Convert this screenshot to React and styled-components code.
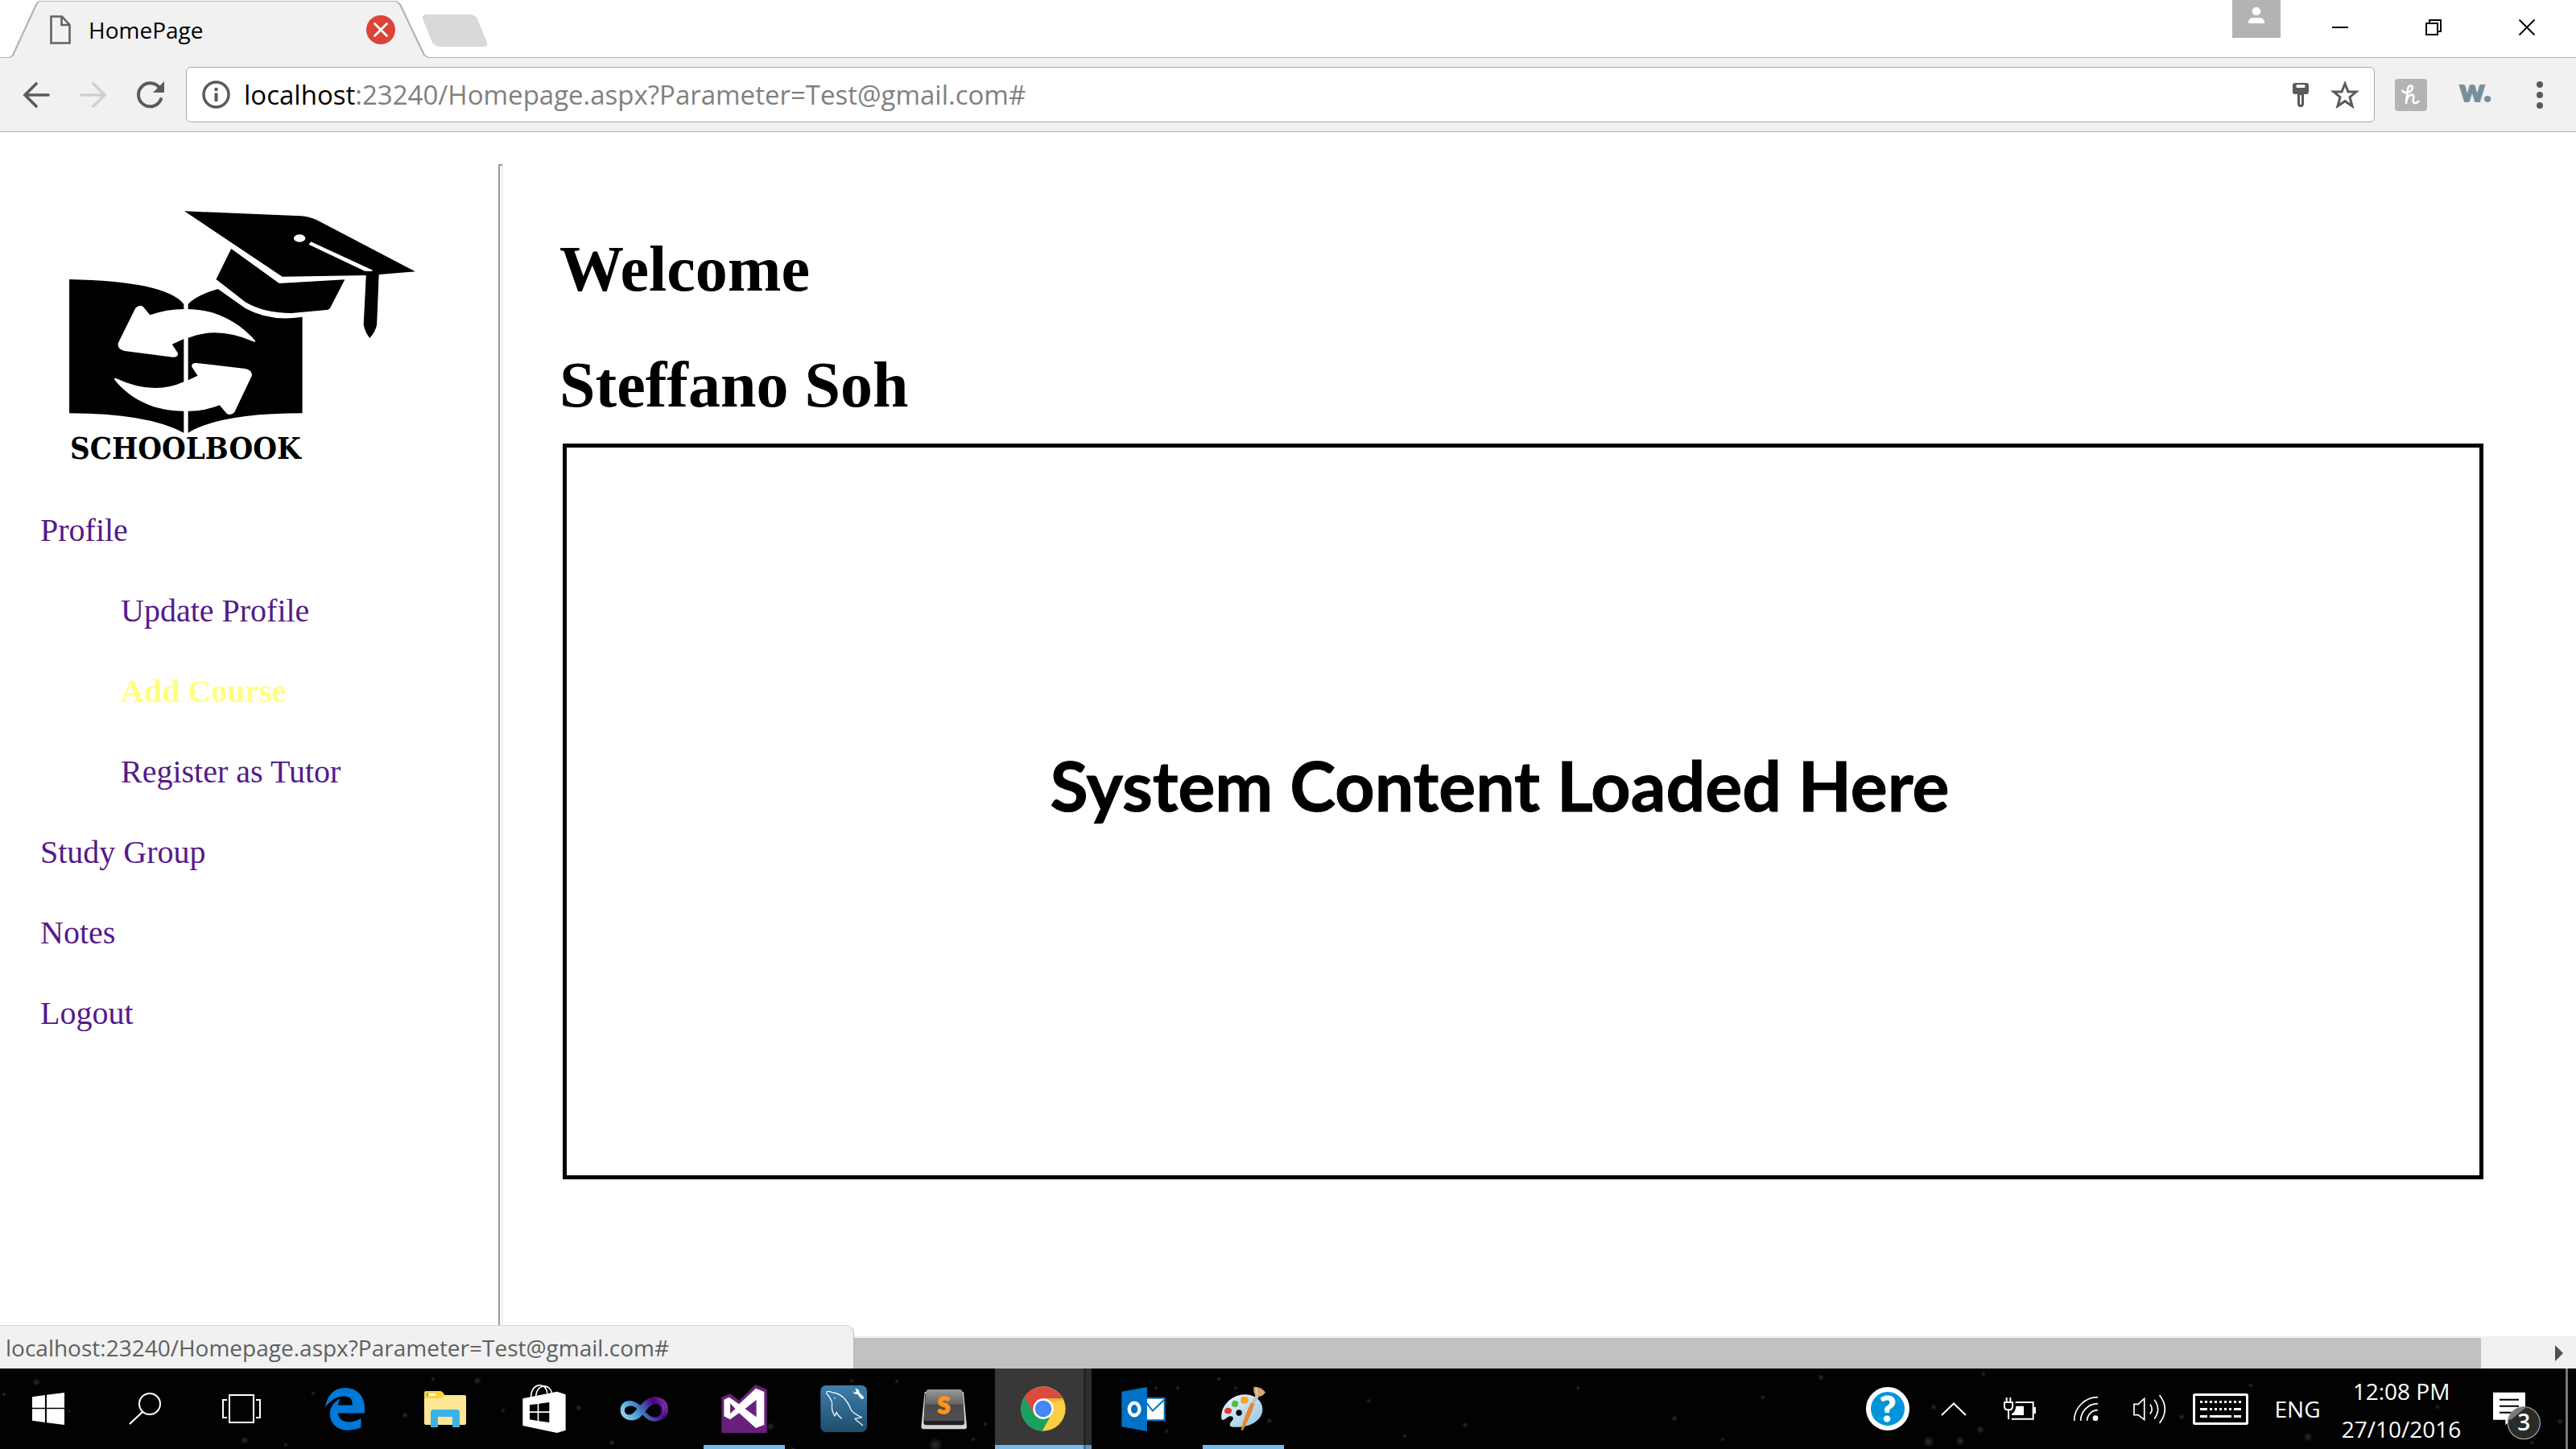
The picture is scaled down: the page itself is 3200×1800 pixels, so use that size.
import React from "react";
import styled, { createGlobalStyle, css } from "styled-components";

const UI = `"Open Sans", "Noto Sans", sans-serif`;
const SERIF = `"Liberation Serif", "Times New Roman", serif`;

const GlobalStyle = createGlobalStyle`
  *, *::before, *::after { box-sizing: border-box; }
  body { margin: 0; background: #fff; }
  button { border: 0; padding: 0; background: none; font: inherit; color: inherit; }
`;

/* ---------- shared ---------- */

const Drawing = styled.svg`
  display: block;
  flex: none;
  overflow: visible;
  width: ${(p) => p.$w}px;
  height: ${(p) => p.$h}px;
`;

const Icon = ({ box, w, h, children }) => (
  <Drawing $w={w} $h={h} viewBox={box} preserveAspectRatio="none" aria-hidden="true" fill="none">
    {children}
  </Drawing>
);

const Screen = styled.div`
  display: flex;
  flex-direction: column;
  height: 100vh;
  overflow: hidden;
  font-family: ${UI};
`;

/* ---------- tab strip ---------- */

const TabStrip = styled.header`
  display: flex;
  align-items: flex-start;
  height: 72px;
  padding: 0 3px 0 12px;
  border-bottom: 1px solid #b1b1b1;
`;

const Tab = styled.div`
  position: relative;
  z-index: 0;
  display: flex;
  align-items: center;
  width: 521px;
  height: 72px;
  padding: 2px 42px 0 50px;
  font-size: 28px;
  line-height: 36px;
  color: #000;
  &::before, &::after {
    content: "";
    position: absolute;
    z-index: -1;
    inset: 0;
    background: #b4b4b4;
    clip-path: polygon(0 100%, 0 71px, 3px 68px, 32px 5px, 36px 1px, 481px 1px, 486px 5px, 516px 68px, 521px 71px, 100% 100%);
  }
  &::after {
    background: #f1f1f1;
    clip-path: polygon(0 100%, 1px 72px, 5px 69px, 34px 6px, 37px 2px, 480px 2px, 484px 6px, 514px 69px, 520px 72px, 100% 100%);
  }
`;

const TabTitle = styled.span`
  flex: 1;
  padding-left: 22px;
`;

const TabClose = styled.button`
  display: grid;
  place-items: center;
  width: 36px;
  height: 36px;
  border-radius: 50%;
  background: #db4437;
`;

const NewTab = styled.button`
  width: 68px;
  height: 40px;
  margin: 18px auto 0 -2px;
  border-radius: 6px;
  background: #d9d9d9;
  transform: skewX(22deg);
`;

const UserBadge = styled.button`
  display: flex;
  justify-content: center;
  width: 60px;
  height: 47px;
  padding-top: 9px;
  margin-right: 16px;
  background: #b3b3b3;
`;

const WindowButton = styled.button`
  display: grid;
  place-items: center;
  width: 116px;
  height: 68px;
`;

/* ---------- toolbar ---------- */

const Toolbar = styled.div`
  display: flex;
  align-items: center;
  padding: 11px 5px 11px 9px;
  background: #f1f1f1;
  border-bottom: 1px solid #b1b1b1;
`;

const ToolButton = styled.button`
  display: grid;
  place-items: center;
  width: 71px;
  height: 60px;
`;

const Omnibox = styled.div`
  flex: 1;
  display: flex;
  align-items: center;
  height: 69px;
  margin: 0 5px 0 9px;
  padding: 0 18px 0 19px;
  border: 1px solid #a9a9a9;
  border-radius: 6px;
  background: #fff;
  font-size: 33px;
  line-height: 44px;
`;

const Host = styled.label`
  padding-left: 17px;
  color: #000;
`;

const Address = styled.input`
  flex: 1;
  min-width: 0;
  border: 0;
  padding: 0;
  outline: 0;
  background: none;
  font: inherit;
  color: #808080;
`;

const OmniButton = styled.button`
  margin-left: 27px;
`;

const ExtensionButton = styled.button`
  display: grid;
  place-items: center;
  width: 80px;
  height: 60px;
`;

const HoneyTile = styled.span`
  display: grid;
  place-items: center;
  width: 40px;
  height: 40px;
  border-radius: 4px;
  background: #b1b3b5;
`;

const Wordmark = styled.span`
  padding-bottom: 14px;
  font-family: Lato, sans-serif;
  font-weight: 900;
  font-size: 38px;
  line-height: 40px;
  color: #78909c;
  -webkit-text-stroke: 2px #78909c;
`;

/* ---------- web page ---------- */

const Viewport = styled.div`
  position: relative;
  flex: 1;
  min-height: 0;
  display: flex;
  flex-direction: column;
`;

const Page = styled.div`
  flex: 1;
  min-height: 0;
  display: flex;
  font-family: ${SERIF};
  font-size: 40px;
`;

const Sidebar = styled.aside`
  flex: none;
  width: 619px;
  padding-top: 96px;
`;

const Brand = styled.div`
  padding-left: 83px;
`;

const BrandName = styled.div`
  padding-left: 4px;
  font-family: "DejaVu Serif Condensed", "DejaVu Serif", serif;
  font-weight: bold;
  font-size: 38px;
  line-height: 34px;
  color: #000;
`;

const Menu = styled.ul`
  display: flex;
  flex-direction: column;
  gap: 50px;
  margin: 0;
  padding: ${(p) => (p.$nested ? "50px 0 0 100px" : "60px 0 0 50px")};
  list-style: none;
  line-height: 50px;
`;

const MenuLink = styled.a`
  color: #551a8b;
  text-decoration: none;
  ${(p) =>
    p.$active &&
    css`
      color: #ffff80;
      font-weight: bold;
    `}
`;

const Divider = styled.div`
  flex: none;
  width: 6px;
  margin-top: 40px;
  border: 2px solid #eee;
  border-top-color: #9a9a9a;
  border-left-color: #9a9a9a;
  border-bottom: 0;
`;

const Main = styled.main`
  flex: 1;
  padding: 124px 115px 0 70px;
`;

const Heading = styled.h1`
  margin: 0 0 ${(p) => (p.$last ? 27 : 52)}px;
  font-size: 80px;
  line-height: 92px;
  font-weight: bold;
  color: #000;
`;

const ContentFrame = styled.section`
  display: grid;
  place-items: center;
  height: 914px;
  margin-left: 4px;
  padding: 0 58px 66px 0;
  border: 5px solid #000;
  font-family: Lato, sans-serif;
  font-weight: bold;
  font-size: 86px;
  line-height: 106px;
  color: #000;
  -webkit-text-stroke: 1px #000;
`;

const ScrollTrack = styled.div`
  display: flex;
  height: 40px;
  padding: 2px 16px 0 40px;
  background: #f1f1f1;
`;

const ScrollThumb = styled.div`
  flex: 1;
  margin-right: 92px;
  background: #c1c1c1;
`;

const ScrollButton = styled.button`
  display: grid;
  place-items: center;
`;

const StatusBubble = styled.div`
  position: absolute;
  left: 0;
  bottom: 0;
  width: 1061px;
  height: 54px;
  padding: 7px;
  border-top: 1px solid #d6d6d6;
  border-right: 1px solid #b8b8b8;
  border-top-right-radius: 10px;
  background: #f1f1f1;
  font-size: 28px;
  line-height: 40px;
  color: #5f5f5f;
`;

/* ---------- taskbar ---------- */

const STARS = [
  [45, 17, 5], [5, 32, 3], [78, 34, 3], [86, 53, 2], [304, 89, 5], [355, 95, 3], [538, 13, 3],
  [593, 15, 5], [503, 58, 4], [389, 31, 3], [625, 52, 3], [103, 104, 3], [719, 49, 4], [760, 92, 4],
  [957, 72, 5], [985, 101, 4], [1058, 15, 3], [1114, 16, 3], [1162, 95, 9], [1209, 88, 3],
  [1224, 69, 3], [1436, 24, 3], [1463, 24, 3], [1514, 13, 3], [1535, 24, 3], [1577, 65, 4], [1449, 78, 3],
  [2262, 11, 4], [2396, 91, 7], [2435, 90, 6], [2460, 76, 5], [2402, 48, 4], [2464, 7, 3], [2710, 60, 4],
  [2867, 85, 6], [2796, 21, 3], [3180, 66, 4], [3028, 48, 3], [3145, 92, 3], [1700, 40, 3], [1820, 70, 4],
  [1960, 24, 3], [2080, 62, 4], [2190, 36, 3], [1745, 84, 3], [2140, 88, 3],
];

const starField = STARS.map(
  ([x, y, r]) => `radial-gradient(circle at ${x}px ${y}px, #2b3034 0, transparent ${r}px)`
).join(",");

const Taskbar = styled.footer`
  flex: none;
  display: flex;
  height: 100px;
  background: ${starField}, #030203;
  color: #fff;
`;

const SystemButton = styled.button`
  display: grid;
  place-items: center;
  width: 120px;
`;

const AppList = styled.div`
  flex: 1;
  display: flex;
  gap: 4px;
  padding-left: 8px;
`;

const AppButton = styled.button`
  position: relative;
  display: grid;
  place-items: center;
  width: 120px;
  ${(p) =>
    p.$running &&
    css`
      &::after {
        content: "";
        position: absolute;
        left: ${p.$active ? 0 : 10}px;
        right: ${p.$active ? 0 : 9}px;
        bottom: 0;
        height: 5px;
        background: ${p.$active ? "linear-gradient(90deg, #76b9ed 110px, #476f8e 110px 113px, #5f95bf 113px)" : "#76b9ed"};
      }
    `}
  ${(p) =>
    p.$active &&
    css`
      background: linear-gradient(90deg, #383838 110px, #222 110px 113px, #2d2d2d 113px);
    `}
`;

const TrayButton = styled.button`
  display: grid;
  place-items: center;
  flex: none;
  width: ${(p) => p.$width || 82}px;
  font-size: 28px;
  line-height: 47px;
`;

const Clock = styled(TrayButton)`
  align-content: center;
  padding-top: 3px;
`;

const NotificationButton = styled(TrayButton)`
  padding-top: 18px;
`;

const ShowDesktop = styled.button`
  width: 13px;
  border-left: 3px solid #777;
`;

/* ---------- drawings ---------- */

const SchoolbookLogo = () => (
  <Icon box="60 210 1140 840" w={436} h={280}>
    <g fill="#000">
      <path d="M442 217L820 235Q845 236 872 250L1192 442L1074 453Q1073 460 1072 500L1067 640Q1062 668 1044 690Q1028 668 1024 640L1032 456L760 461Z" />
      <path d="M594 357L750 486L963 472L915 578Q911 585 903 585L790 597Q700 597 640 556L545 471Z" />
      <path d="M68 471Q380 478 440 563V1043Q320 970 68 970Z" />
      <path d="M454 563Q480 530 551 507L640 579Q720 630 825 611V970Q560 970 454 1043Z" />
    </g>
    <g fill="#fff">
      <ellipse cx="816" cy="318" rx="19" ry="14" />
      <path d="M853 331L1054 437L1050 441L1028 440L846 341Z" />
      <path d="M330 604Q385 582 440 582C540 578 620 630 672 700Q674 706 666 703Q550 645 454 689L440 693L402 713L420 745Q424 760 405 761L248 738Q222 730 227 708L283 578Q296 564 308 573Z" />
      <path d="M485 830L466 797Q464 781 482 783L640 804Q663 810 661 830L605 965Q595 980 580 972L556 940Q510 962 454 962C350 966 268 920 215 845Q213 838 220 840Q340 905 440 853L454 847Z" />
    </g>
  </Icon>
);

const WindowsIcon = () => (
  <Icon box="98 120 98 120" w={40} h={40}>
    <path fill="#fff" d="M98 136L137 129V176H98ZM142 128L196 120V176H142ZM98 181H137V231L98 224ZM142 181H196V240L142 232Z" />
  </Icon>
);

const SearchIcon = () => (
  <Icon box="0 0 40 40" w={40} h={40}>
    <circle cx="26" cy="14" r="13" stroke="#fff" strokeWidth="2" />
    <path d="M17 24L1 39" stroke="#fff" strokeWidth="2.2" />
  </Icon>
);

const TaskViewIcon = () => (
  <Icon box="0 0 48 36" w={48} h={36}>
    <path d="M9 1H39V35H9ZM6 7H1V29H6M42 7H47V29H42" stroke="#fff" strokeWidth="2" />
  </Icon>
);

const EdgeIcon = () => (
  <Icon box="988 99 120 160" w={49} h={53}>
    <path fill="#0078d7" d="M988 172C994 125 1015 99 1050 99C1085 101 1108 128 1108 175V194H1027C1029 218 1044 227 1060 227Q1080 227 1097 213V248Q1078 258 1055 258C1022 256 1002 230 1002 196C1003 170 1014 151 1034 140Q1028 150 1027 164H1071C1071 143 1064 131 1046 131C1020 132 1003 148 988 172Z" />
  </Icon>
);

const FolderIcon = () => (
  <Icon box="0 0 53 45" w={53} h={45}>
    <path d="M1 3Q1 0 4 0H20Q24 0 26 5H51Q53 5 53 7V40Q53 42 51 42H3Q1 42 1 40Z" fill="#ffe694" />
    <path d="M1 3Q1 0 4 0H20Q24 1 26 5Q24 9 20 9H1Z" fill="#fdd23b" />
    <path d="M4 3H15V6H4Z" fill="#fff" />
    <path d="M4 3H6V6H4Z" fill="#29a9e8" />
    <path d="M9 45V27Q9 23 13 23H41Q45 23 45 27V45H36V32H18V45Z" fill="#3bb3e8" />
  </Icon>
);

const StoreIcon = () => (
  <Icon box="26 90 162 180" w={54} h={60}>
    <path d="M58 138C57 80 116 80 118 122M76 132C80 85 128 86 136 122" stroke="#fff" strokeWidth="5" />
    <path fill="#fff" fillRule="evenodd" d="M27 142L155 116L187 127V260L155 270L27 243ZM53 166V190H82V162ZM87 161V190H126V156ZM53 195V220L82 225V195ZM87 195V226L126 231V195Z" />
  </Icon>
);

const BlendIcon = () => (
  <Icon box="388 140 182 92" w={61} h={31}>
    <defs>
      <linearGradient id="loop" x1="0" x2="1" y1="0.6" y2="0.3">
        <stop offset="0" stopColor="#8fd0ea" />
        <stop offset="0.3" stopColor="#3f9fd4" />
        <stop offset="0.55" stopColor="#4546a4" />
        <stop offset="0.75" stopColor="#4b0082" />
        <stop offset="1" stopColor="#7d35a8" />
      </linearGradient>
    </defs>
    <path fill="url(#loop)" fillRule="evenodd" d="M390 190C390 165 408 154 426 155C444 156 454 166 464 172C482 152 500 140 522 141C550 143 567 162 567 187C567 212 545 231 518 231C498 231 485 220 472 207C460 220 448 228 430 227C408 226 390 212 390 190ZM406 194C408 204 418 209 430 205C440 201 446 192 452 184C444 177 436 173 426 174C412 175 404 183 406 194ZM482 196C494 210 508 218 522 216C537 213 543 196 540 182C537 170 528 165 518 167C502 170 492 182 482 196Z" />
    <path d="M404 172Q394 190 408 214M545 166Q560 190 538 218" stroke="#b7d8f0" strokeOpacity="0.4" strokeWidth="2" />
  </Icon>
);

const VisualStudioIcon = () => (
  <Icon box="767 90 170 180" w={57} h={60}>
    <path fill="#68217a" d="M768 137L800 124L833 150L893 90L936 108V270H768Z" />
    <path fill="#fff" fillRule="evenodd" d="M777 146L796 137L833 163L895 104L926 117V240L895 252L833 196L800 220L777 208ZM800 160V198L819 180ZM855 180L897 147V211Z" />
  </Icon>
);

const MySqlIcon = () => (
  <Icon box="1136 93 175 174" w={58} h={58}>
    <defs>
      <linearGradient id="sea" x1="0" x2="0" y1="0" y2="1">
        <stop offset="0" stopColor="#3d7fad" />
        <stop offset="1" stopColor="#1f4e6b" />
      </linearGradient>
    </defs>
    <rect x="1137" y="93" width="174" height="174" rx="20" fill="url(#sea)" />
    <path
      d="M1160 124C1156 114 1168 112 1182 120C1215 122 1238 150 1252 185C1262 200 1278 205 1291 212L1266 217C1274 228 1286 232 1295 243M1160 124C1170 134 1172 140 1178 151C1184 160 1176 170 1181 186C1184 200 1190 205 1190 207C1194 204 1194 198 1196 193C1202 205 1210 212 1217 217"
      stroke="#eef6fb" strokeWidth="4" strokeLinejoin="round"
    />
    <circle cx="1190" cy="140" r="3" fill="#d5e6f0" />
    <path d="M1266 104L1272 114L1264 121L1257 113Q1262 128 1275 125L1290 144Q1298 146 1300 137L1282 119Q1283 105 1266 104Z" fill="#fff" />
  </Icon>
);

const SublimeIcon = () => (
  <Icon box="130 100 170 152" w={57} h={51}>
    <defs>
      <linearGradient id="key" x1="0" x2="0" y1="0" y2="1">
        <stop offset="0" stopColor="#999" />
        <stop offset="0.45" stopColor="#666" />
        <stop offset="0.5" stopColor="#4a4a4a" />
        <stop offset="1" stopColor="#505050" />
      </linearGradient>
    </defs>
    <path d="M144 112H288L300 240Q300 250 290 250H141Q131 250 131 240Z" fill="#d4d4d4" />
    <path d="M146 118L140 226Q140 235 150 235H282Q292 235 291 226L285 118Z" fill="#222" />
    <path d="M158 103H274Q282 103 284 112L291 212Q290 219 282 219H149Q141 219 141 212L149 112Q151 103 158 103Z" fill="url(#key)" />
    <text x="215" y="192" textAnchor="middle" fontFamily="Lato, sans-serif" fontWeight="900" fontSize="86" fill="#ff9518" stroke="#ff9518" strokeWidth="5">S</text>
  </Icon>
);

const ChromeIcon = () => (
  <Icon box="0 0 168 168" w={56} h={56}>
    <circle cx="84" cy="84" r="83" fill="#ffcd40" />
    <path d="M12 43A83 83 0 0 1 157 46H84L48 104Z" fill="#db4b3f" />
    <path d="M14 40L50 104Q62 122 84 122L108 116L80 167A83 83 0 0 1 14 40Z" fill="#1aa15f" />
    <path d="M84 46H157L160 52L110 58Z" fill="#e9b52f" />
    <circle cx="84" cy="84" r="38" fill="#fff" />
    <circle cx="84" cy="84" r="31" fill="#4687f4" />
  </Icon>
);

const OutlookIcon = () => (
  <Icon box="878 98 164 164" w={55} h={55}>
    <rect x="960" y="136" width="81" height="88" rx="4" fill="#0072c6" />
    <path d="M972 142H1035V218H972Z" fill="#fff" />
    <path d="M972 158L994 186L1036 146" stroke="#0072c6" strokeWidth="6" />
    <path d="M879 115L973 98V262L879 245Z" fill="#0072c6" />
    <ellipse cx="926" cy="180" rx="19" ry="23" stroke="#fff" strokeWidth="13" />
  </Icon>
);

const PaintIcon = () => (
  <Icon box="1245 95 170 168" w={57} h={56}>
    <defs>
      <linearGradient id="palette" x1="0" x2="1" y1="0" y2="1">
        <stop offset="0" stopColor="#f1f8fc" />
        <stop offset="1" stopColor="#8fc4e2" />
      </linearGradient>
    </defs>
    <path d="M1249 215C1244 165 1290 125 1338 126C1380 128 1402 155 1401 182C1400 225 1350 252 1290 247C1274 244 1280 232 1290 222C1298 208 1285 202 1272 210C1262 220 1251 226 1249 215Z" fill="url(#palette)" />
    <circle cx="1314" cy="194" r="11" fill="#000" />
    <path d="M1260 186Q1266 170 1276 176Q1290 178 1286 190Q1280 202 1270 197Q1260 198 1260 186Z" fill="#e23b32" />
    <path d="M1287 160Q1290 146 1301 149Q1313 150 1311 163Q1308 176 1297 172Q1286 172 1287 160Z" fill="#58b947" />
    <path d="M1320 147Q1321 132 1334 134Q1350 134 1349 149Q1346 162 1333 160Q1320 160 1320 147Z" fill="#f9a61c" />
    <path d="M1360 155L1372 160Q1352 220 1327 261L1322 258Q1334 200 1360 155Z" fill="#e8862c" />
    <path d="M1376 128L1388 134L1372 161L1360 156Z" fill="#b9c4cc" />
    <path d="M1369 97Q1396 96 1412 118Q1402 132 1388 134L1374 130Q1366 116 1369 97Z" fill="#d2a679" />
    <path d="M1378 100Q1376 116 1384 130" stroke="#ecd0ac" strokeWidth="4" />
  </Icon>
);

const HelpIcon = () => (
  <Icon box="0 0 56 56" w={56} h={56}>
    <circle cx="28" cy="28" r="24" fill="#0095da" stroke="#fff" strokeWidth="6" />
    <text x="28" y="44" textAnchor="middle" fontFamily="Lato, sans-serif" fontWeight="900" fontSize="44" fill="#fff" stroke="#fff">?</text>
  </Icon>
);

const BatteryIcon = () => (
  <Icon box="0 0 120 84" w={40} h={28}>
    <path d="M44 18H110V80H30" stroke="#fff" strokeWidth="6" />
    <path d="M111 36H120V60H111Z" fill="#fff" />
    <path d="M46 32H75V66H30V60Q44 55 46 32Z" fill="#fff" />
    <path d="M3 18H33V36Q31 46 22 46H14Q5 46 3 36ZM11 18V0M25 18V0M18 46V81" stroke="#fff" strokeWidth="6" />
  </Icon>
);

const WifiIcon = () => (
  <Icon box="0 0 90 90" w={30} h={30}>
    <path d="M2 90A88 88 0 0 1 90 2M26 90A64 64 0 0 1 90 26M50 90A40 40 0 0 1 90 50" stroke="#fff" strokeWidth="5" />
    <circle cx="81" cy="80" r="10" fill="#fff" />
  </Icon>
);

const SpeakerIcon = () => (
  <Icon box="0 0 122 110" w={41} h={37}>
    <path d="M3 37H18L41 16V94L18 76H3Z" stroke="#fff" strokeWidth="5" />
    <path d="M62 37Q76 55 62 73M78 20Q104 55 78 91M97 3Q137 55 97 107" stroke="#fff" strokeWidth="5" />
  </Icon>
);

const KeyboardIcon = () => (
  <Icon box="0 0 69 39" w={69} h={39}>
    <rect x="1.5" y="1.5" width="66" height="36" rx="1" stroke="#fff" strokeWidth="3" />
    <path d="M9 10.5H60" stroke="#fff" strokeWidth="3" strokeDasharray="3 3" />
    <path d="M9 19.5H18M21 19.5H24M27 19.5H30M33 19.5H36M39 19.5H42M45 19.5H48M51 19.5H60" stroke="#fff" strokeWidth="3" />
    <path d="M9 28.5H18M21 28.5H48M51 28.5H60" stroke="#fff" strokeWidth="3" />
  </Icon>
);

const NotificationIcon = () => (
  <Icon box="0 0 180 180" w={60} h={60}>
    <path d="M0 2H120V104H66L46 124V104H0Z" fill="#fff" />
    <path d="M24 29H96M24 53H96M24 77H96" stroke="#000" strokeWidth="6" />
    <circle cx="115" cy="116" r="60" fill="#2a2a2a" stroke="#999" strokeWidth="4" />
    <path d="M58 104L66 104L120 60V58A60 60 0 0 0 57 104Z" fill="#7a7a7a" />
    <text x="115" y="145" textAnchor="middle" fontFamily="Open Sans, sans-serif" fontWeight="600" fontSize="84" fill="#fff">3</text>
  </Icon>
);

const APPS = [
  { name: "Microsoft Edge", Glyph: EdgeIcon },
  { name: "File Explorer", Glyph: FolderIcon },
  { name: "Store", Glyph: StoreIcon },
  { name: "Blend", Glyph: BlendIcon },
  { name: "Visual Studio", Glyph: VisualStudioIcon, running: true },
  { name: "MySQL Workbench", Glyph: MySqlIcon },
  { name: "Sublime Text", Glyph: SublimeIcon },
  { name: "Google Chrome", Glyph: ChromeIcon, running: true, active: true },
  { name: "Outlook", Glyph: OutlookIcon },
  { name: "Paint", Glyph: PaintIcon, running: true },
];

const MENU = [
  {
    label: "Profile",
    items: [{ label: "Update Profile" }, { label: "Add Course", active: true }, { label: "Register as Tutor" }],
  },
  { label: "Study Group" },
  { label: "Notes" },
  { label: "Logout" },
];

const MenuList = ({ items, nested }) => (
  <Menu $nested={nested}>
    {items.map((item) => (
      <li key={item.label}>
        <MenuLink href="#" $active={item.active}>{item.label}</MenuLink>
        {item.items && <MenuList items={item.items} nested />}
      </li>
    ))}
  </Menu>
);

export default function App() {
  return (
    <Screen>
      <GlobalStyle />
      <TabStrip>
        <Tab>
          <Icon box="0 0 26 36" w={26} h={36}>
            <path d="M1.5 1.5H15L24.5 12V34.5H1.5ZM14.5 2V12H24" stroke="#636363" strokeWidth="2.6" />
          </Icon>
          <TabTitle>HomePage</TabTitle>
          <TabClose aria-label="Close tab">
            <Icon box="0 0 18 18" w={18} h={18}>
              <path d="M1.5 1.5L16.5 16.5M16.5 1.5L1.5 16.5" stroke="#fff" strokeWidth="2.8" strokeLinecap="round" />
            </Icon>
          </TabClose>
        </Tab>
        <NewTab aria-label="New tab" />
        <UserBadge aria-label="Current user">
          <Icon box="0 0 60 60" w={20} h={20}>
            <path d="M24 0H36L46 10V20L36 30H24L14 20V10ZM0 60V50L10 40H50L60 50V60Z" fill="#fff" />
          </Icon>
        </UserBadge>
        <WindowButton aria-label="Minimize">
          <Icon box="0 0 20 20" w={20} h={20}><path d="M0 10H20" stroke="#000" strokeWidth="2" /></Icon>
        </WindowButton>
        <WindowButton aria-label="Restore">
          <Icon box="0 0 20 20" w={20} h={20}>
            <path d="M1 5H15V19H1ZM5 5V1H19V15H15" stroke="#000" strokeWidth="2" />
          </Icon>
        </WindowButton>
        <WindowButton aria-label="Close">
          <Icon box="0 0 20 20" w={20} h={20}><path d="M0.5 0.5L19.5 19.5M19.5 0.5L0.5 19.5" stroke="#000" strokeWidth="1.8" /></Icon>
        </WindowButton>
      </TabStrip>

      <Toolbar>
        <ToolButton aria-label="Back">
          <Icon box="0 0 34 32" w={34} h={32}>
            <path d="M17 2L3 16L17 30M3 16H32" stroke="#5a5a5a" strokeWidth="3.6" strokeLinecap="round" />
          </Icon>
        </ToolButton>
        <ToolButton aria-label="Forward">
          <Icon box="0 0 34 32" w={34} h={32}>
            <path d="M17 2L31 16L17 30M31 16H2" stroke="#d0d0d0" strokeWidth="3.6" strokeLinecap="round" />
          </Icon>
        </ToolButton>
        <ToolButton aria-label="Reload">
          <Icon box="0 0 34 34" w={34} h={34}>
            <path d="M30 22A14.5 14.5 0 1 1 28 8" stroke="#5a5a5a" strokeWidth="4" strokeLinecap="round" />
            <path d="M34 0V14H20Z" fill="#5a5a5a" />
          </Icon>
        </ToolButton>
        <Omnibox>
          <Icon box="0 0 35 35" w={35} h={35}>
            <circle cx="17.5" cy="17.5" r="15.5" stroke="#5a5a5a" strokeWidth="3.5" />
            <path d="M17.5 15.5V26M17.5 9V13" stroke="#5a5a5a" strokeWidth="4" />
          </Icon>
          <Host htmlFor="address">localhost</Host>
          <Address id="address" defaultValue=":23240/Homepage.aspx?Parameter=Test@gmail.com#" />
          <OmniButton aria-label="Saved passwords">
            <Icon box="0 0 60 90" w={20} h={30}>
              <path fillRule="evenodd" fill="#5a5a5a" d="M10 0H50Q60 0 60 10V32Q60 42 50 42H42V80Q40 90 30 90Q20 90 18 80V42H10Q0 42 0 32V10Q0 0 10 0ZM14 7V18H46V7ZM27 46V80H33V46Z" />
            </Icon>
          </OmniButton>
          <OmniButton aria-label="Bookmark this page">
            <Icon box="0 0 108 108" w={36} h={36}>
              <path d="M54 12L66 42H96L72 62L81 95L54 77L27 95L36 62L12 42H42Z" stroke="#5a5a5a" strokeWidth="9" />
            </Icon>
          </OmniButton>
        </Omnibox>
        <ExtensionButton aria-label="Honey">
          <HoneyTile>
            <Icon box="0 0 120 120" w={40} h={40}>
              <path
                d="M28 44C36 58 62 50 66 34C66 22 50 22 48 40L42 90M44 78C48 60 70 52 70 66L68 80C68 94 80 92 88 84"
                stroke="#fff" strokeWidth="8" strokeLinecap="round" strokeLinejoin="round"
              />
            </Icon>
          </HoneyTile>
        </ExtensionButton>
        <ExtensionButton><Wordmark>w.</Wordmark></ExtensionButton>
        <ExtensionButton aria-label="Menu">
          <Icon box="0 0 8 34" w={8} h={34}>
            <g fill="#5a5a5a"><circle cx="4" cy="4" r="4" /><circle cx="4" cy="17" r="4" /><circle cx="4" cy="30" r="4" /></g>
          </Icon>
        </ExtensionButton>
      </Toolbar>

      <Viewport>
        <Page>
          <Sidebar>
            <Brand>
              <SchoolbookLogo />
              <BrandName>SCHOOLBOOK</BrandName>
            </Brand>
            <nav><MenuList items={MENU} /></nav>
          </Sidebar>
          <Divider />
          <Main>
            <Heading>Welcome</Heading>
            <Heading $last>Steffano Soh</Heading>
            <ContentFrame>System Content Loaded Here</ContentFrame>
          </Main>
        </Page>
        <ScrollTrack>
          <ScrollThumb />
          <ScrollButton aria-label="Scroll right">
            <Icon box="0 0 10 20" w={10} h={20}><path d="M0 0L10 10L0 20Z" fill="#505050" /></Icon>
          </ScrollButton>
        </ScrollTrack>
        <StatusBubble>localhost:23240/Homepage.aspx?Parameter=Test@gmail.com#</StatusBubble>
      </Viewport>

      <Taskbar>
        <SystemButton aria-label="Start"><WindowsIcon /></SystemButton>
        <SystemButton aria-label="Search"><SearchIcon /></SystemButton>
        <SystemButton aria-label="Task View"><TaskViewIcon /></SystemButton>
        <AppList>
          {APPS.map(({ name, Glyph, running, active }) => (
            <AppButton key={name} aria-label={name} $running={running} $active={active}><Glyph /></AppButton>
          ))}
        </AppList>
        <TrayButton aria-label="Help"><HelpIcon /></TrayButton>
        <TrayButton aria-label="Show hidden icons">
          <Icon box="0 0 32 17" w={32} h={17}><path d="M1 16L16 1.5L31 16" stroke="#fff" strokeWidth="2" /></Icon>
        </TrayButton>
        <TrayButton aria-label="Battery"><BatteryIcon /></TrayButton>
        <TrayButton aria-label="Network"><WifiIcon /></TrayButton>
        <TrayButton aria-label="Volume" $width={76}><SpeakerIcon /></TrayButton>
        <TrayButton aria-label="Touch keyboard" $width={100}><KeyboardIcon /></TrayButton>
        <TrayButton $width={92}>ENG</TrayButton>
        <Clock $width={166}><span>12:08 PM</span><span>27/10/2016</span></Clock>
        <NotificationButton aria-label="Notifications" $width={121}><NotificationIcon /></NotificationButton>
        <ShowDesktop aria-label="Show desktop" />
      </Taskbar>
    </Screen>
  );
}
